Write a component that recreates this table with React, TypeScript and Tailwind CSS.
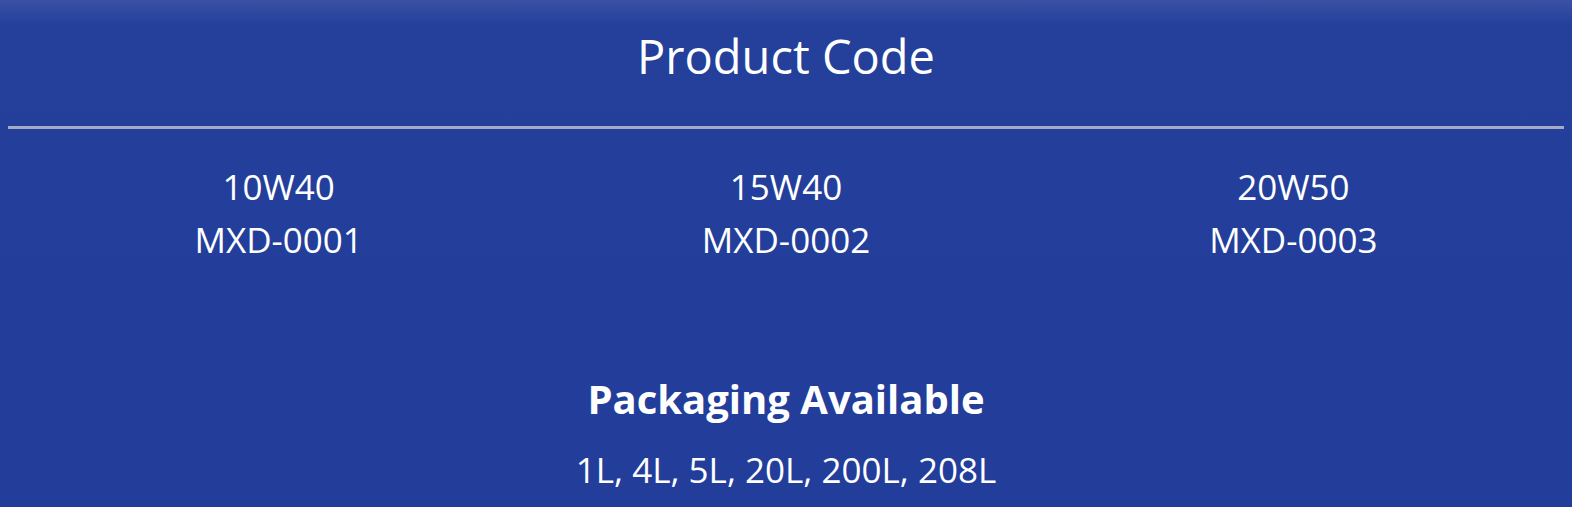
export default function App() {
  const codes = [
    { grade: "10W40", code: "MXD-0001" },
    { grade: "15W40", code: "MXD-0002" },
    { grade: "20W50", code: "MXD-0003" },
  ];
  return (
    <div
      className="min-h-screen bg-[linear-gradient(to_bottom,#3a52a4_0px,#24409b_24px,#223d9a_100%)] text-white"
      style={{ fontFamily: '"Open Sans", "Noto Sans", sans-serif' }}
    >
      <section className="pt-[28px]">
        <h2 className="text-center text-[47px] leading-[56px] font-normal">Product Code</h2>
        <hr className="mx-2 mt-[42px] border-0 border-t-[3px] border-[#a3abc3]" />
        <div className="grid grid-cols-3 px-[25px] pt-[31px]">
          {codes.map((c) => (
            <div key={c.code} className="text-center text-[35px] leading-[53px]">
              <p>{c.grade}</p>
              <p>{c.code}</p>
            </div>
          ))}
        </div>
      </section>
      <section className="pt-[108px] text-center">
        <h3 className="text-[40px] leading-[50px] font-bold">Packaging Available</h3>
        <p className="mt-[24px] text-[35px] leading-[44px]">1L, 4L, 5L, 20L, 200L, 208L</p>
      </section>
    </div>
  );
}
